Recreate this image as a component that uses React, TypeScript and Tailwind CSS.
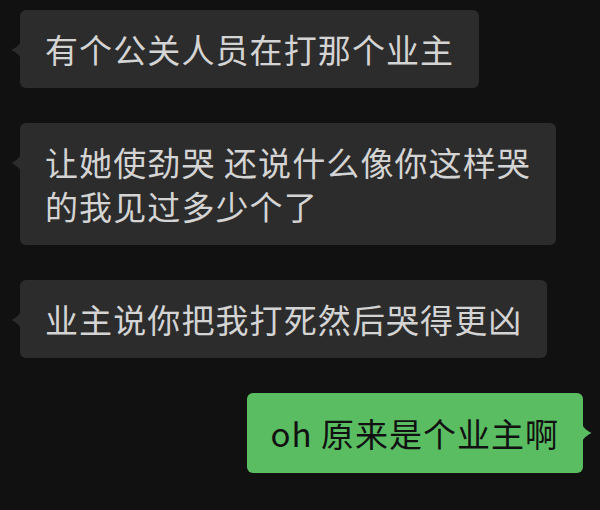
// 微信暗色模式聊天截图
const FONT = "font-['Noto_Sans_CJK_SC','Noto_Sans',sans-serif]"

function LeftBubble({ lines }: { lines: string[] }) {
  return (
    <div className="relative ml-[20px] self-start rounded-[6px] bg-[#2c2c2c] px-[25px] py-[17px]">
      <svg
        className="absolute left-[-9px] top-[31px]"
        width="10"
        height="18"
        viewBox="0 0 10 18"
        aria-hidden="true"
      >
        <path d="M10 0 C8 5 4 7 0.5 9 C4 11 8 13 10 18 Z" fill="#2c2c2c" />
      </svg>
      {lines.map((l) => (
        <p key={l} className="whitespace-pre text-[33px] leading-[44px] tracking-[1.1px] text-[#d4d4d4]">
          {l}
        </p>
      ))}
    </div>
  )
}

function RightBubble({ text }: { text: string }) {
  return (
    <div className="relative mr-[17px] self-end rounded-[6px] bg-[#5abd62] px-[24px] py-[18px]">
      <svg
        className="absolute right-[-9px] top-[31px]"
        width="10"
        height="18"
        viewBox="0 0 10 18"
        aria-hidden="true"
      >
        <path d="M0 0 C2 5 6 7 9.5 9 C6 11 2 13 0 18 Z" fill="#5abd62" />
      </svg>
      <p className="whitespace-pre text-[33px] leading-[44px] tracking-[1px] text-[#111111]">{text}</p>
    </div>
  )
}

export default function App() {
  return (
    <div className={`flex h-[510px] w-[600px] flex-col gap-[35px] overflow-hidden bg-[#111111] pt-[10px] ${FONT}`}>
      <LeftBubble lines={['有个公关人员在打那个业主']} />
      <LeftBubble lines={['让她使劲哭 还说什么像你这样哭', '的我见过多少个了']} />
      <LeftBubble lines={['业主说你把我打死然后哭得更凶']} />
      <RightBubble text="oh 原来是个业主啊" />
    </div>
  )
}
